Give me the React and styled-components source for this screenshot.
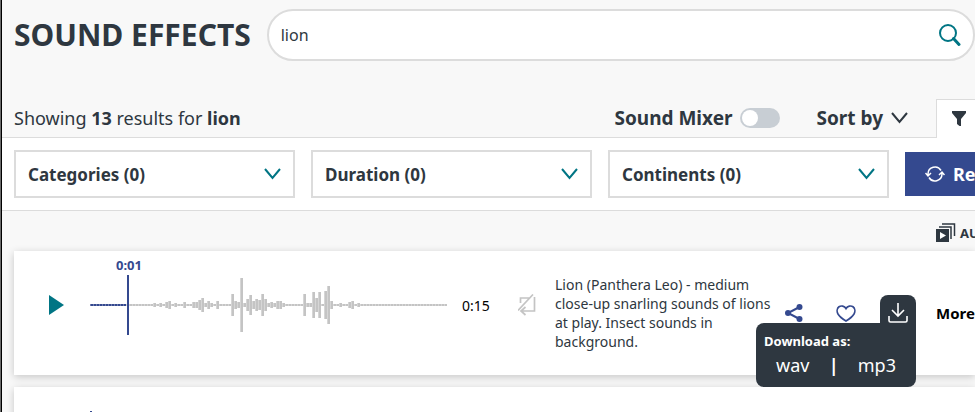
import styled, { createGlobalStyle } from 'styled-components';

const filters = ['Categories', 'Duration', 'Continents'];

// bar heights, one bar every 3px from the start of the clip
const flat = (n) => Array(n).fill(2);
const wave = [
  ...flat(21), 4, 2, 4, 2, 6, 8, 2, 4, 2, 2, 6, 2, 2, 6, 6, 10, 14, 4, 8, 4, 2, 8, 2, 2, 2, 2,
  22, 8, 6, 54, 4, 12, 20, 8, 12, 10, 22, 12, 4, 6, 4, 8, 8, 4, ...flat(6),
  22, 4, 4, 26, 14, 26, 2, 28, 38, 8, 2, 2, 4, 2, 2, 6, 8, 2, 4, ...flat(29),
];

const GlobalStyle = createGlobalStyle`
  * {
    box-sizing: border-box;
  }

  body {
    margin: 0;
    border-left: 1px solid #6b6b6b;
    background: #f8f8f8;
    color: #2e3740;
    font-family: "Noto Sans", "Open Sans", sans-serif;
    overflow: hidden;
  }

  button, input {
    font: inherit;
    color: inherit;
  }

  button {
    border: 0;
    padding: 0;
    background: none;
    cursor: pointer;
  }
`;

const Page = styled.div`
  min-height: 100vh;
  border-left: 1px solid #000;
`;

const Header = styled.header`
  display: flex;
  align-items: flex-start;
  gap: 16px;
  padding: 9px 0 0 12px;
`;

const Title = styled.h1`
  margin: 0;
  font-size: 30px;
  line-height: 52px;
  font-weight: 700;
  white-space: nowrap;
`;

const SearchBox = styled.form`
  flex: 1;
  display: flex;
  align-items: center;
  height: 52px;
  padding: 0 12px;
  background: #fff;
  border: 2px solid #dcdcdc;
  border-radius: 26px;
`;

const SearchInput = styled.input`
  flex: 1;
  min-width: 0;
  border: 0;
  padding: 0;
  outline: 0;
  background: none;
  font-size: 16px;
`;

const SearchButton = styled.button`
  display: flex;
  color: #007584;
`;

const Toolbar = styled.div`
  display: flex;
  align-items: flex-end;
  margin-top: 37px;
  padding-left: 12px;
  box-shadow: inset 0 -1px #dcdcdc;
`;

const Summary = styled.p`
  flex: 1;
  margin: 0;
  font-size: 18px;
  line-height: 40px;
`;

const MixerLabel = styled.label`
  display: flex;
  align-items: center;
  gap: 8px;
  margin-right: 36px;
  font-size: 19px;
  line-height: 40px;
  font-weight: 700;
`;

const Toggle = styled.input`
  appearance: none;
  display: flex;
  align-items: center;
  width: 40px;
  height: 20px;
  margin: 0;
  padding: 0 2px;
  border-radius: 10px;
  background: #c8ced4;

  &::before {
    content: '';
    width: 16px;
    height: 16px;
    border-radius: 50%;
    background: #fff;
  }

  &:checked {
    justify-content: flex-end;
    background: #007584;
  }
`;

const SortButton = styled.button`
  display: flex;
  align-items: center;
  gap: 8px;
  margin-right: 28px;
  font-size: 19px;
  line-height: 40px;
  font-weight: 700;
`;

const FilterTab = styled.button`
  display: flex;
  align-items: center;
  width: 39px;
  height: 39px;
  padding-left: 15px;
  background: #fff;
  border: solid #dcdcdc;
  border-width: 1px 0 0 1px;
`;

const FilterBar = styled.div`
  display: flex;
  align-items: center;
  gap: 16px;
  padding: 12px 0 12px 12px;
  background: #fff;
  border-bottom: 1px solid #dcdcdc;
  overflow: hidden;
`;

const FilterButton = styled.button`
  flex: 0 0 281px;
  display: flex;
  align-items: center;
  justify-content: space-between;
  height: 48px;
  padding: 0 12px;
  border: 2px solid #dcdcdc;
  font-size: 17px;
  font-weight: 700;

  svg {
    color: #007584;
  }
`;

const ResetButton = styled.button`
  flex: none;
  display: flex;
  align-items: center;
  gap: 8px;
  height: 44px;
  padding: 0 20px;
  background: #34498f;
  color: #fff;
  font-size: 18px;
  font-weight: 700;
`;

const AutoplayRow = styled.div`
  display: flex;
  height: 40px;
  align-items: center;
  justify-content: flex-end;
  padding-top: 4px;
`;

const AutoplayButton = styled.button`
  display: flex;
  align-items: center;
  gap: 4px;
  width: 39px;
  font-size: 13px;
  font-weight: 700;
  overflow: hidden;

  svg {
    flex: none;
  }
`;

const Results = styled.ul`
  display: flex;
  flex-direction: column;
  gap: 12px;
  margin: 0;
  padding: 0 0 0 12px;
  list-style: none;
`;

const Card = styled.li`
  display: flex;
  align-items: center;
  height: 124px;
  background: #fff;
  box-shadow: 0 2px 8px rgba(0, 0, 0, 0.2);
`;

const PlayButton = styled.button`
  display: flex;
  flex: none;
  margin: 0 26px 16px 35px;
`;

const Player = styled.div`
  position: relative;
  flex: 0 0 358px;
  display: flex;
  align-items: center;
  height: 60px;
  margin-bottom: 16px;
`;

const Playhead = styled.div`
  position: absolute;
  top: 0;
  bottom: 0;
  width: 2px;
  background: #34498f;
`;

const Elapsed = styled.span`
  position: absolute;
  bottom: 100%;
  left: 50%;
  transform: translateX(-50%);
  margin-left: 1px;
  color: #34498f;
  font-size: 13px;
  line-height: 20px;
  font-weight: 700;
`;

const Duration = styled.span`
  flex: none;
  width: 56px;
  padding-left: 14px;
  margin-bottom: 16px;
  color: #000;
  font-size: 14px;
`;

const LoopButton = styled.button`
  flex: none;
  display: flex;
  width: 20px;
  margin: 0 17px 16px 14px;
`;

const Description = styled.p`
  flex: 0 1 217px;
  margin: 0;
  font-size: 14px;
  line-height: 19px;
`;

const Actions = styled.div`
  flex: none;
  display: flex;
  align-items: center;
  gap: 8px;
  width: 144px;
  height: 36px;
  color: #34498f;
`;

const IconButton = styled.button`
  display: flex;
  align-items: center;
  justify-content: center;
  width: 44px;
  height: 36px;
`;

const Download = styled.div`
  position: relative;
  margin-left: auto;
`;

const DownloadButton = styled(IconButton)`
  width: 36px;
  border-radius: 8px 8px 0 0;
  background: #2e3740;
  color: #fff;
`;

const DownloadMenu = styled.div`
  position: absolute;
  z-index: 1;
  top: 28px;
  right: 0;
  width: 160px;
  height: 64px;
  padding: 8px;
  border-radius: 8px;
  background: #2e3740;
  color: #fff;
  font-size: 13px;
  line-height: 20px;
  font-weight: 700;
`;

const DownloadArrow = styled.span`
  position: relative;
  z-index: 2;
  display: flex;
`;

const Formats = styled.div`
  display: flex;
  justify-content: space-between;
  padding: 0 12px;
  font-size: 18px;
  line-height: 28px;
  font-weight: 400;

  a {
    color: inherit;
    text-decoration: none;
  }
`;

const Separator = styled.span`
  font-weight: 700;
`;

const MoreButton = styled.button`
  flex: 1;
  min-width: 0;
  margin-left: 20px;
  overflow: hidden;
  color: #000;
  font-size: 15px;
  font-weight: 700;
  text-align: left;
  white-space: nowrap;
`;

const Chevron = () => (
  <svg width="17" height="12" viewBox="0 0 17 12" fill="none" stroke="currentColor" strokeWidth="2">
    <path d="M1 1l7.500 9L16 1" />
  </svg>
);

const SearchIcon = () => (
  <svg width="24" height="24" viewBox="0 0 24 24" fill="none" stroke="currentColor">
    <circle cx="11" cy="10" r="8" strokeWidth="2" />
    <path d="M16.500 15.500l5.500 6" strokeWidth="3" strokeLinecap="round" />
  </svg>
);

const FunnelIcon = () => (
  <svg width="14" height="16" viewBox="0 0 14 16" fill="currentColor">
    <path d="M0 0h14v2L9 8v7H7.500L5 13V8L0 2z" />
  </svg>
);

const ResetIcon = () => (
  <svg width="20" height="18" viewBox="0 0 20 18" fill="none" stroke="currentColor" strokeWidth="1.500">
    <path d="M3 10.500V9a7 7 0 0 1 13-3.500M17 7.500V9a7 7 0 0 1-13 3.500M.500 8l2.500 3 3-3M14 10l3-3 2.500 3" />
  </svg>
);

const AutoplayIcon = () => (
  <svg width="20" height="20" viewBox="0 0 20 20" fill="none" stroke="currentColor">
    <path d="M0 6h13v13H0z" fill="currentColor" stroke="none" />
    <path d="M4 9v7l6-3.500z" fill="#fff" stroke="none" />
    <path d="M3 4h12v12M6 1h12.500v12" strokeWidth="1.500" />
  </svg>
);

const PlayIcon = () => (
  <svg width="15" height="20" viewBox="0 0 15 20" fill="#007584">
    <path d="M0 0l15 10L0 20z" />
  </svg>
);

const LoopOffIcon = () => (
  <svg width="18" height="22" viewBox="0 0 18 22" fill="none" stroke="#c4c4c4" strokeWidth="1.700">
    <path d="M2.500 9V4H12M16.500 3v14H3M7.500 13l-4.500 4 4.500 4M15 .500L0 16.500" />
  </svg>
);

const ShareIcon = () => (
  <svg width="18" height="18" viewBox="0 0 18 18" fill="currentColor">
    <path d="M14.500 3L3 9l11.500 6" fill="none" stroke="currentColor" strokeWidth="2" />
    <circle cx="3" cy="9" r="3" />
    <circle cx="14.500" cy="3" r="3" />
    <circle cx="14.500" cy="15" r="3" />
  </svg>
);

const HeartIcon = () => (
  <svg width="20" height="17" viewBox="0 0 20 17" fill="none" stroke="currentColor" strokeWidth="1.700">
    <path d="M10 3.500C8.500.800 5 .400 3 1.800 1 3.300.600 6.500 2 9c1.800 3 5.500 5.500 8 7 2.500-1.500 6.200-4 8-7 1.400-2.500 1-5.700-1-7.200-2-1.400-5.500-1-7 1.700z" />
  </svg>
);

const DownloadIcon = () => (
  <svg width="20" height="20" viewBox="0 0 20 20" fill="none" stroke="currentColor" strokeWidth="1.600">
    <path d="M10 0v13M4 7l6 6 6-6M1 13v4.500q0 1.500 1.500 1.500h15q1.500 0 1.500-1.500V13" />
  </svg>
);

const Waveform = ({ played }) => (
  <svg width="358" height="60" viewBox="0 0 358 60" shapeRendering="crispEdges">
    {wave.map((h, i) => (
      <g key={i} fill={i < played ? '#34498f' : '#c4c4c4'}>
        <rect x={i * 3 + 1} y={30 - h / 2} width="2" height={h} />
        <rect x={i * 3} y={30 - h / 2} width="1" height={h} opacity="0.7" />
      </g>
    ))}
  </svg>
);

const App = () => (
  <>
    <GlobalStyle />
    <Page>
      <Header>
        <Title>SOUND EFFECTS</Title>
        <SearchBox role="search">
          <SearchInput aria-label="Search sound effects" defaultValue="lion" />
          <SearchButton type="button" aria-label="Search"><SearchIcon /></SearchButton>
        </SearchBox>
      </Header>
      <Toolbar>
        <Summary>Showing <b>13</b> results for <b>lion</b></Summary>
        <MixerLabel>
          Sound Mixer
          <Toggle type="checkbox" role="switch" />
        </MixerLabel>
        <SortButton>Sort by <Chevron /></SortButton>
        <FilterTab aria-label="Filters"><FunnelIcon /></FilterTab>
      </Toolbar>
      <FilterBar>
        {filters.map((name) => (
          <FilterButton key={name}>{name} (0) <Chevron /></FilterButton>
        ))}
        <ResetButton><ResetIcon /> Reset</ResetButton>
      </FilterBar>
      <AutoplayRow>
        <AutoplayButton><AutoplayIcon /> AUTOPLAY</AutoplayButton>
      </AutoplayRow>
      <Results>
        <Card>
          <PlayButton aria-label="Play"><PlayIcon /></PlayButton>
          <Player>
            <Waveform played={12} />
            <Playhead style={{ left: 37 }}>
              <Elapsed>0:01</Elapsed>
            </Playhead>
          </Player>
          <Duration>0:15</Duration>
          <LoopButton aria-label="Loop"><LoopOffIcon /></LoopButton>
          <Description>
            Lion (Panthera Leo) - medium close-up snarling sounds of lions at play. Insect sounds in background.
          </Description>
          <Actions>
            <IconButton aria-label="Share"><ShareIcon /></IconButton>
            <IconButton aria-label="Favourite"><HeartIcon /></IconButton>
            <Download>
              <DownloadButton aria-label="Download">
                <DownloadArrow><DownloadIcon /></DownloadArrow>
              </DownloadButton>
              <DownloadMenu>
                Download as:
                <Formats>
                  <a href="#wav">wav</a>
                  <Separator>|</Separator>
                  <a href="#mp3">mp3</a>
                </Formats>
              </DownloadMenu>
            </Download>
          </Actions>
          <MoreButton>More</MoreButton>
        </Card>
        <Card>
          <PlayButton aria-label="Play"><PlayIcon /></PlayButton>
          <Player>
            <Waveform played={0} />
            <Playhead style={{ left: 0 }} />
          </Player>
        </Card>
      </Results>
    </Page>
  </>
);

export default App;
